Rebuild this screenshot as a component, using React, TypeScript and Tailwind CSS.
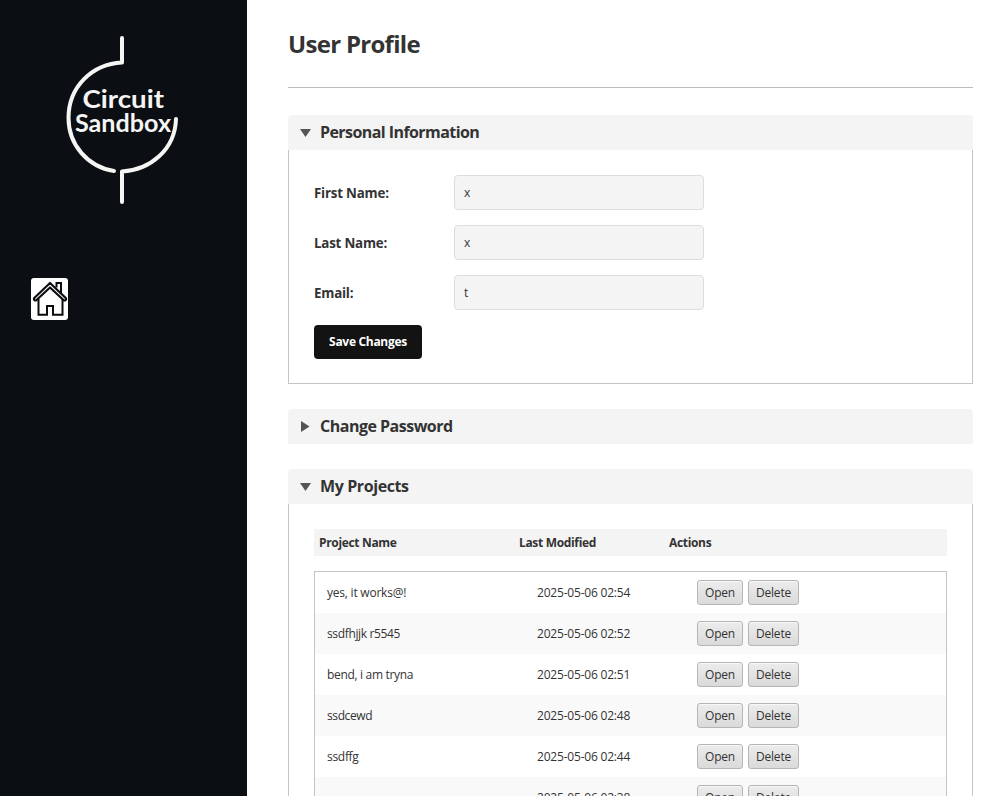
import type { ReactNode } from "react";

const projects = [
  { name: "yes, it works@!", modified: "2025-05-06 02:54", track: "tracking-[-0.22px]" },
  { name: "ssdfhjjk r5545", modified: "2025-05-06 02:52", track: "tracking-[-0.36px]" },
  { name: "bend, i am tryna", modified: "2025-05-06 02:51", track: "tracking-[-0.32px]" },
  { name: "ssdcewd", modified: "2025-05-06 02:48", track: "tracking-[-0.4px]" },
  { name: "ssdffg", modified: "2025-05-06 02:44", track: "tracking-[-0.3px]" },
  { name: "", modified: "2025-05-06 02:38", track: "tracking-normal" },
];

function Logo() {
  return (
    <svg
      className="block h-[190px] w-[150px]"
      viewBox="50 25 150 190"
      fill="none"
      stroke="#f5f5f3"
      strokeWidth="4"
      strokeLinecap="round"
      strokeLinejoin="round"
    >
      <path d="M122 38V62.5C92 64 68.500 87 68.500 118C68.500 145 88 167 114 171" />
      <path d="M122 202V171.500C150 170 175 150 176 119" />
      <g fill="#f5f5f3" stroke="none" fontFamily="Lato, sans-serif" fontWeight="700" fontSize="25">
        <text x="82.500" y="108" textLength="81.500" lengthAdjust="spacingAndGlyphs">Circuit</text>
        <text x="75" y="131.500" textLength="96" lengthAdjust="spacingAndGlyphs">Sandbox</text>
      </g>
    </svg>
  );
}

function HomeIcon() {
  return (
    <svg className="block h-[42px] w-[37px]" viewBox="0 0 37 42" fill="none" stroke="#0b0d10" strokeWidth="2">
      <path d="M25.500 9.500V5H30V15" />
      <path d="M7.500 21V36.700H16V28H22V36.700H31.500V21" />
      <path
        d="M19 5L3 20.200Q2.600 22.500 5 22.500L19 9.500L33 22.500Q35.400 22.500 35 20.200Z"
        strokeWidth="2.200"
        strokeLinejoin="round"
      />
    </svg>
  );
}

function Section({ title, open, track, children }: { title: string; open: boolean; track: string; children?: ReactNode }) {
  return (
    <section className="mb-[25px]">
      <div className="flex h-[35px] items-center rounded-t bg-[#f4f4f4] pl-3">
        <svg className="mr-[9px] h-[11px] w-[11px]" viewBox="0 0 11 11" fill="#555">
          {open ? <path d="M0 2H11L5.500 10Z" /> : <path d="M1 0V11L9.500 5.500Z" />}
        </svg>
        <h2 className={`pb-0.5 text-base leading-5 font-bold ${track}`}>{title}</h2>
      </div>
      {open && <div className="border border-t-0 border-[#c4c4c4] p-[25px] pb-6">{children}</div>}
    </section>
  );
}

function Field({ label, value }: { label: string; value: string }) {
  return (
    <div className="mb-[15px] flex h-[35px] items-center">
      <label className="w-[140px] pt-0.5 text-[13.330px] font-bold tracking-[-0.2px]">{label}</label>
      <div className="flex h-[35px] w-[250px] items-center rounded-[4px] border border-[#ddd] bg-[#f4f4f4] px-[9px] text-xs">
        {value}
      </div>
    </div>
  );
}

function RowButton({ label, size }: { label: string; size: string }) {
  return (
    <button
      className={`flex h-[25px] items-center justify-center rounded-[3px] border border-[#b5b5b5] bg-linear-to-b from-[#ececec] to-[#dadada] tracking-[-0.2px] text-[#333] shadow-[inset_0_1px_0_#f8f8f8] ${size}`}
    >
      {label}
    </button>
  );
}

export default function App() {
  return (
    <div className="flex h-[796px] w-[991px] overflow-hidden bg-white font-['Open_Sans','Noto_Sans',sans-serif] text-[#333]">
      <aside className="w-[247px] shrink-0 bg-[#0b0f14] pt-[25px]">
        <div className="pl-[50px]">
          <Logo />
        </div>
        <a className="mt-[63px] ml-[31px] block h-[42px] w-[37px] rounded-[3px] bg-white">
          <HomeIcon />
        </a>
      </aside>
      <main className="min-w-0 flex-1 pr-[18px] pl-[41px]">
        <div className="mb-[27px] flex h-[88px] items-center border-b border-[#bbb]">
          <h1 className="text-2xl leading-8 font-bold tracking-[-0.7px]">User Profile</h1>
        </div>
        <Section title="Personal Information" open track="tracking-[-0.57px]">
          <Field label="First Name:" value="x" />
          <Field label="Last Name:" value="x" />
          <Field label="Email:" value="t" />
          <button className="block h-[34px] w-[108px] rounded bg-[#131313] text-xs font-bold tracking-[-0.3px] text-white">
            Save Changes
          </button>
        </Section>
        <Section title="Change Password" open={false} track="tracking-[-0.5px]" />
        <Section title="My Projects" open track="tracking-[-0.4px]">
          <div className="mb-[15px] flex h-[27px] items-center bg-[#f4f4f4] px-[5px] text-xs font-bold tracking-[-0.33px]">
            <span className="w-[200px]">Project Name</span>
            <span className="w-[150px]">Last Modified</span>
            <span>Actions</span>
          </div>
          <div className="border border-[#c4c4c4]">
            {projects.map((p) => (
              <div key={p.modified} className="flex h-[41px] items-center pl-3 text-xs odd:bg-white even:bg-[#f9f9f9]">
                <span className={`w-[210px] ${p.track}`}>{p.name}</span>
                <span className="w-[160px] tracking-[-0.2px]">{p.modified}</span>
                <div className="flex gap-[5px]">
                  <RowButton label="Open" size="w-[46px]" />
                  <RowButton label="Delete" size="w-[51px]" />
                </div>
              </div>
            ))}
          </div>
        </Section>
      </main>
    </div>
  );
}
